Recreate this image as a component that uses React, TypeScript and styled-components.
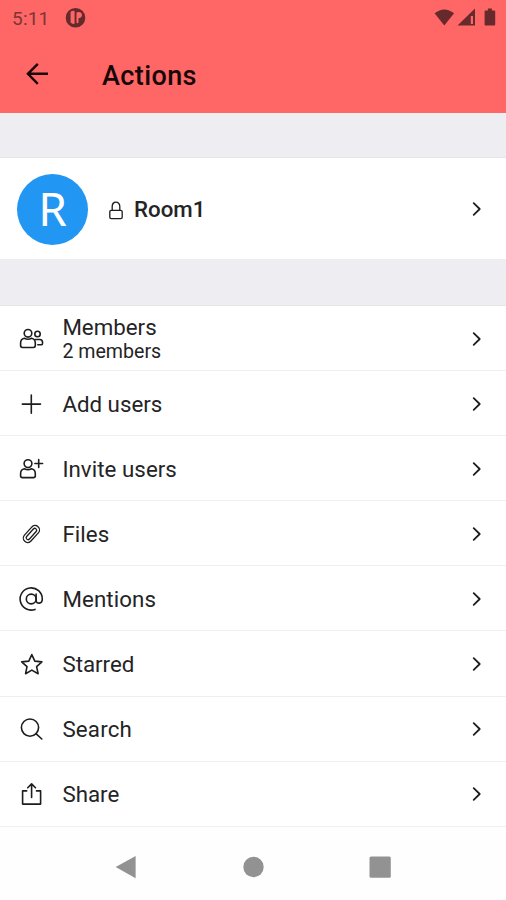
import React from "react";
import styled, { createGlobalStyle } from "styled-components";

const GlobalStyle = createGlobalStyle`
  * { box-sizing: border-box; }
  body { margin: 0; background: #fff; font-family: Roboto, sans-serif; color: #242426; }
`;

const Screen = styled.div`
  width: 506px;
  height: 900px;
  overflow: hidden;
  display: flex;
  flex-direction: column;
  background: #fefefe;
`;

const Header = styled.header`
  height: 112.5px;
  flex: none;
  background: #ff6666;
`;

const StatusBar = styled.div`
  height: 36px;
  display: flex;
  align-items: center;
  padding: 0 8px 0 12px;
  color: #662a2c;
`;

const Clock = styled.span`
  width: 53px;
  padding-top: 1px;
  font-size: 19px;
  line-height: 36px;
  letter-spacing: 0.2px;
  color: #7c3535;
`;

const StatusIcons = styled.div`
  margin-left: auto;
  display: flex;
`;

const TitleBar = styled.div`
  height: 76px;
  display: flex;
  align-items: center;
  padding-left: 24px;
`;

const Title = styled.h1`
  margin: 3px 0 0 53px;
  font-size: 27px;
  line-height: 32px;
  font-weight: 500;
  letter-spacing: 0.4px;
  color: #170808;
`;

const Gap = styled.div<{ $height: number }>`
  height: ${(p) => p.$height}px;
  flex: none;
  background: #eeeef2;
  border-bottom: 1px solid #e6e6e8;
`;

const RoomCard = styled.div`
  height: 101px;
  flex: none;
  display: flex;
  align-items: center;
  padding: 1px 17px 0;
  background: #fff;
`;

const Avatar = styled.div`
  width: 71px;
  height: 71px;
  border-radius: 50%;
  background: #2196f3;
  color: #fff;
  font-family: "Noto Sans", sans-serif;
  font-size: 46px;
  line-height: 69px;
  text-align: center;
`;

const RoomName = styled.div`
  display: flex;
  align-items: center;
  margin-left: 19px;
  flex: 1;
`;

const RoomTitle = styled.span`
  margin-left: 9px;
  font-size: 22.3px;
  line-height: 28px;
  font-weight: 500;
`;

const Row = styled.div`
  height: 65.1px;
  flex: none;
  display: flex;
  align-items: center;
  padding: 1px 17px 0 18px;
  border-bottom: 1.5px solid #efeff0;
  background: #fff;
`;

const Labels = styled.div`
  flex: 1;
  margin-left: 18.4px;
`;

const Label = styled.div<{ $spacing: number }>`
  font-size: 22.3px;
  line-height: 26px;
  letter-spacing: ${(p) => p.$spacing}px;
`;

const SubLabel = styled.div`
  font-size: 19.6px;
  line-height: 24px;
`;

const NavBar = styled.nav`
  flex: 1;
  display: flex;
  justify-content: space-between;
  align-items: center;
  padding: 7px 114px 0 114px;
`;

const LineIcon = styled.svg`
  display: block;
  flex: none;
  fill: none;
  stroke: #1d1d1f;
  stroke-width: 1.6;
  stroke-linecap: round;
  stroke-linejoin: round;
`;

const BackIcon = styled(LineIcon)`
  stroke: #180808;
  stroke-width: 2.4;
  stroke-linecap: butt;
  stroke-linejoin: miter;
`;

const ChevronIcon = styled(LineIcon)`
  stroke-width: 1.8;
`;

const SolidIcon = styled.svg`
  display: block;
  flex: none;
  fill: currentColor;
`;

const NavIcon = styled(SolidIcon)`
  color: #929292;
`;

const Chevron = () => (
  <ChevronIcon width="22" height="22">
    <path d="M6.7 5.2 12.7 11l-6 5.8" />
  </ChevronIcon>
);

const icons: Record<string, React.ReactNode> = {
  members: (
    <>
      <circle cx="10" cy="7.3" r="3.8" />
      <path d="M6.4 12.3C3.8 12.8 2.6 14.7 2.6 17v2.600c0 1.200.7 1.900 1.900 1.900h10.900c1.200 0 1.900-.7 1.900-1.900V17c0-2.300-1.200-4.200-3.800-4.700-2.200 1.200-4.900 1.200-7.100 0Z" />
      <circle cx="19.5" cy="8" r="2.7" />
      <path d="M17.5 13.5h4.300c1.600 0 2.700 1.100 2.700 2.700v1.500c0 .6-.4 1-1 1h-3.700" />
    </>
  ),
  add: <path d="M13.3 4v18.2M4.3 13.1h18.2" />,
  invite: (
    <>
      <circle cx="10" cy="7.6" r="3.9" />
      <path d="M6.4 12.7C3.8 13.2 2.6 15.1 2.6 17.4v2.3c0 1.2.7 1.9 1.9 1.9h10.9c1.2 0 1.9-.7 1.9-1.9v-2.3c0-2.3-1.2-4.2-3.8-4.7-2.2 1.2-4.9 1.2-7.1 0ZM20.7 3.6v7.8M16.9 7.5h7.7" />
    </>
  ),
  files: (
    <g strokeWidth="1.3" transform="rotate(42 13.4 13)">
      <path d="M9 8v10.500a4.400 4.400 0 0 0 8.800 0V7.500a4.400 4.400 0 0 0-8.800 0" />
      <path d="M11.500 8v10a1.900 1.900 0 0 0 3.800 0V8a1.900 1.900 0 0 0-3.800 0" />
    </g>
  ),
  mentions: (
    <>
      <circle cx="13.2" cy="13" r="4.9" />
      <path d="M18.1 8v6.4c0 3.7 6.2 4 6.2-1.4A11.1 11.1 0 1 0 17 23.4" />
    </>
  ),
  starred: <path d="m13.8 3.600 3 6.500 7.100.8-5.300 4.800 1.500 7-6.300-3.600-6.200 3.600 1.400-7-5.300-4.800 7.100-.8Z" />,
  search: (
    <>
      <circle cx="12" cy="11.6" r="8.6" />
      <path d="m18.2 17.8 5.6 5.2" />
    </>
  ),
  share: <path d="M8.7 9.9H4.6v13.2h18V9.9h-4.1M13.6 16.5V3.1M9.7 6.8l3.9-3.9 3.9 3.9" />,
};

const items = [
  { icon: "members", label: "Members", sub: "2 members", spacing: 0 },
  { icon: "add", label: "Add users", spacing: 0 },
  { icon: "invite", label: "Invite users", spacing: 0.05 },
  { icon: "files", label: "Files", spacing: 0.1 },
  { icon: "mentions", label: "Mentions", spacing: 0.1 },
  { icon: "starred", label: "Starred", spacing: 0 },
  { icon: "search", label: "Search", spacing: 0.2 },
  { icon: "share", label: "Share", spacing: 0 },
];

export default function App() {
  return (
    <Screen>
      <GlobalStyle />
      <Header>
        <StatusBar>
          <Clock>5:11</Clock>
          <SolidIcon width="22" height="22">
            <path
              fillRule="evenodd"
              d="M10.5.9a9.8 9.8 0 1 0 0 19.600 9.800 9.800 0 0 0 0-19.600ZM5.600 4.800q1.300-1 3-1.100 1 0 1 1V16q0 1-1 1-1.800-.2-3-1.400ZM11.500 5.500q3-1.300 4.800.6 1.400 1.900.2 3.700-1 1.400-3 1.500v4.500q-1.700 1.100-2-.3Z"
            />
          </SolidIcon>
          <StatusIcons>
            <SolidIcon width="64" height="22">
              <path d="M.6 6.200Q10.300-1.400 20.100 6.200L10.300 18.400Z" />
              <path fillRule="evenodd" d="M23.500 18.500 41 1.500v17ZM36.800 9v8h2.200V9Z" />
              <path d="M51.500 3.500h2.400v-2h4v2h2.400q.9 0 .9.9v13.200q0 .9-.9.900h-8.800q-.9 0-.9-.9V4.400q0-.9.9-.9Z" />
            </SolidIcon>
          </StatusIcons>
        </StatusBar>
        <TitleBar>
          <BackIcon width="25" height="26">
            <path d="M24 12.800H4M13.800 2.800 3.900 12.800l9.900 10" />
          </BackIcon>
          <Title>Actions</Title>
        </TitleBar>
      </Header>
      <Gap $height={45.5} />
      <RoomCard>
        <Avatar>R</Avatar>
        <RoomName>
          <LineIcon width="18" height="22">
            <path
              strokeWidth="1.3"
              d="M4.200 12.300h9.600q1.400 0 1.400 1.400v5.600q0 1.400-1.400 1.400H4.200q-1.400 0-1.400-1.400v-5.600q0-1.400 1.400-1.400ZM5.200 12.300V8.400c0-5.700 7.600-5.700 7.600 0v3.900"
            />
          </LineIcon>
          <RoomTitle>Room1</RoomTitle>
        </RoomName>
        <Chevron />
      </RoomCard>
      <Gap $height={47} />
      {items.map((item) => (
        <Row key={item.icon}>
          <LineIcon width="26" height="26">{icons[item.icon]}</LineIcon>
          <Labels>
            <Label $spacing={item.spacing}>{item.label}</Label>
            {item.sub && <SubLabel>{item.sub}</SubLabel>}
          </Labels>
          <Chevron />
        </Row>
      ))}
      <NavBar>
        <NavIcon width="24" height="24">
          <path d="M21.600 1v22.200L1.700 12.100Z" />
        </NavIcon>
        <NavIcon width="24" height="24">
          <circle cx="12.500" cy="12" r="10.200" />
        </NavIcon>
        <NavIcon width="24" height="24">
          <rect x="1.500" y="1.500" width="21.300" height="21.300" rx="1.500" />
        </NavIcon>
      </NavBar>
    </Screen>
  );
}
